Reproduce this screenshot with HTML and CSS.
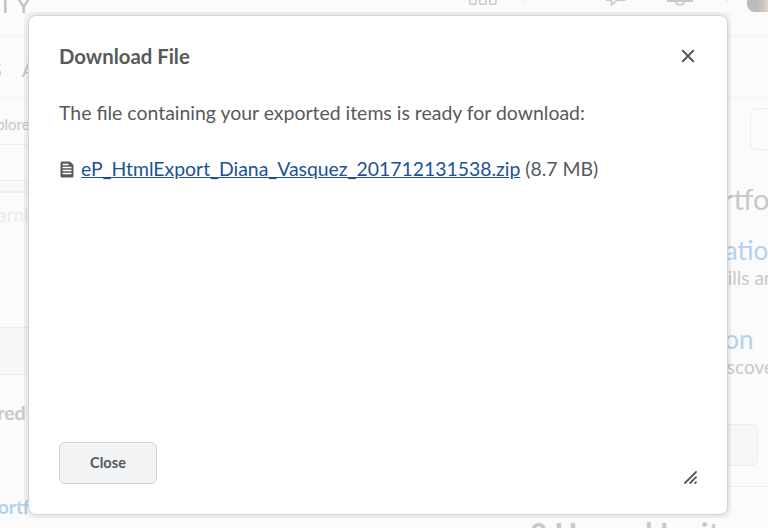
FILE: index.html
```html
<!DOCTYPE html>
<html lang="en">
<head>
    <meta charset="UTF-8">
    <meta name="viewport" content="width=device-width, initial-scale=1.0">
    <title>Download File</title>
    <link rel="stylesheet" href="styles.css">
</head>
<body>
    <!-- Page behind the dialog -->
    <div class="page">
        <div class="topbar">
            <span class="org">CITY</span>
            <svg class="icon-apps" width="30" height="7" viewBox="0 0 30 7" fill="none" stroke="#cacaca" stroke-width="1.6">
                <path d="M1.8 -3V3.2Q1.8 4.2 2.8 4.2H7Q8 4.2 8 3.2V-3M11.8 -3V3.2Q11.8 4.2 12.8 4.2H17Q18 4.2 18 3.2V-3M21.8 -3V3.2Q21.8 4.2 22.8 4.2H27Q28 4.2 28 3.2V-3"/>
            </svg>
            <span class="divider"></span>
            <svg class="icon-chat" width="20" height="7" viewBox="0 0 20 7" fill="none" stroke="#cacaca" stroke-width="1.6">
                <path d="M0 .2H5.5V5L11 .2H19.5"/>
            </svg>
            <svg class="icon-bell" width="26" height="7" viewBox="0 0 26 7" fill="none" stroke="#cacaca" stroke-width="1.6">
                <path d="M0 1H26" stroke-width="2"/>
                <path d="M8.5 1Q9.5 5 13 5T17.5 1"/>
            </svg>
            <span class="divider divider-last"></span>
            <span class="avatar"></span>
        </div>
        <div class="navbar"><span class="nav-active">S</span><span>A</span></div>
        <div class="content">
            <div class="left">
                <div class="tab">Explore</div>
                <div class="filter"></div>
                <div class="gap"></div>
                <div class="prompt">Learning</div>
                <div class="band"></div>
                <div class="shared">Shared</div>
                <div class="portfolio">ePortfolio</div>
            </div>
            <div class="right">
                <div class="field"></div>
                <h2>ePortfolio</h2>
                <a class="link">Presentation</a>
                <p>Skills and</p>
                <a class="link link-short">Collection</a>
                <p>Discover</p>
                <div class="ghost-button"></div>
                <div class="rule"></div>
                <h3>0 Unread Invites</h3>
            </div>
        </div>
    </div>

    <!-- Dialog -->
    <div class="dialog-wrap">
        <div class="dialog">
            <div class="dialog-header">
                <h1>Download File</h1>
                <svg class="dialog-x" width="14" height="14" viewBox="0 0 14 14" stroke="#565a5c" stroke-width="2" stroke-linecap="round">
                    <path d="M1.8 1.8L12.2 12.2M12.2 1.8L1.8 12.2"/>
                </svg>
            </div>
            <p class="message">The file containing your exported items is ready for download:</p>
            <div class="file">
                <svg width="14" height="17" viewBox="0 0 14 17">
                    <path fill="#565a5c" d="M2 .5H10L13.5 4V15Q13.5 16.5 12 16.5H2Q.5 16.5 .5 15V2Q.5 .5 2 .5Z"/>
                    <path stroke="#fff" stroke-width="1.3" d="M2.6 3.5H8.6M2.6 6.5H11.5M2.6 9.5H11.5M2.6 12.5H11.5"/>
                </svg>
                <a href="#">eP_HtmlExport_Diana_Vasquez_201712131538.zip</a>
                <span class="size">(8.7 MB)</span>
            </div>
            <div class="dialog-footer">
                <button type="button">Close</button>
                <svg class="grip" width="14" height="14" viewBox="0 0 14 14" stroke="#565a5c" stroke-width="1.8" stroke-linecap="round">
                    <path d="M2 13L13 2M7.2 13L13 7.2M12.2 13L13 12.2"/>
                </svg>
            </div>
        </div>
    </div>
</body>
</html>
```
FILE: styles.css
```css
* { margin: 0; padding: 0; box-sizing: border-box; }

body {
    font-family: 'Lato', sans-serif;
    color: #565a5c;
    background: #fbfbfb;
    height: 528px;
    overflow: hidden;
    position: relative;
}

/* Background page */
.page {
    height: 528px;
    overflow: hidden;
    color: #c8c8c8;
}

.topbar {
    display: flex;
    height: 37px;
    border-bottom: 1px solid #f1f3f8;
}

.topbar > * { flex-shrink: 0; }

.org {
    width: 500px;
    margin-left: -32px;
    margin-top: -9px;
    font-size: 22px;
    line-height: 27px;
    letter-spacing: 5px;
    color: #bcbcbc;
}

.divider {
    width: 2px;
    height: 2px;
    margin-left: 26px;
    background: #eeeeee;
}

.icon-chat { margin-left: 80px; }
.icon-bell { margin-left: 41px; }
.divider-last { margin-left: 33px; }

.avatar {
    width: 30px;
    height: 12px;
    margin-left: 19px;
    border-radius: 0 0 0 8px;
    background: linear-gradient(90deg, #bdbbba 0 10px, #d2c6bf 17px, #eadbd0 22px);
}

.navbar {
    display: flex;
    gap: 20px;
    height: 61px;
    padding-top: 20px;
    margin-left: -9px;
    font-size: 20px;
    line-height: 24px;
    border-bottom: 1px solid #f5f5f6;
}

.nav-active { color: #b8cfe8; }

.content {
    display: flex;
    height: 430px;
}

.left {
    flex: 0 0 30px;
    overflow: hidden;
    white-space: nowrap;
}

.tab {
    height: 47px;
    padding-top: 16px;
    margin-left: -20px;
    font-size: 15px;
    line-height: 20px;
    border-bottom: 1px solid #f0f0f2;
}

.filter {
    height: 36px;
    border-bottom: 1px solid #eeeeee;
}

.gap {
    height: 12px;
    background: #f8f8f8;
    border-bottom: 2px solid #f0f1f5;
}

.prompt {
    height: 134px;
    padding-top: 10px;
    margin-left: -22px;
    font-size: 19px;
    line-height: 24px;
    color: #e8ebf0;
}

.band {
    height: 48px;
    background: #f7f7f7;
    border-top: 1px solid #ececec;
    border-bottom: 1px solid #ececec;
}

.shared {
    height: 120px;
    padding-top: 26px;
    margin-left: -34px;
    font-size: 19.4px;
    font-weight: bold;
    line-height: 24px;
}

.portfolio {
    margin-left: -24px;
    font-size: 19.4px;
    font-weight: bold;
    line-height: 24px;
    color: #b2d2ec;
}

.right {
    flex: 1;
    min-width: 0;
    padding-left: 490px;
    white-space: nowrap;
}

.field {
    width: 60px;
    height: 42px;
    margin: 10px 0 0 230px;
    border: 1px solid #ededf0;
    border-radius: 6px;
}

.right h2 {
    margin: 31px 0 0 155px;
    font-size: 29px;
    font-weight: normal;
    line-height: 36px;
}

.link {
    display: block;
    margin: 17px 0 0 118px;
    font-size: 26px;
    line-height: 32px;
    color: #b2d2ec;
}

.link-short { margin-top: 33px; }

.right p {
    margin-left: 188px;
    font-size: 19px;
    line-height: 24px;
}

.ghost-button {
    width: 98px;
    height: 42px;
    margin: 45px 0 0 140px;
    background: #f6f6f8;
    border: 1px solid #ededf0;
    border-radius: 6px;
}

.rule {
    height: 1px;
    margin-top: 20px;
    background: #f0f0f0;
}

.right h3 {
    margin: 28px 0 0 10px;
    font-size: 30px;
    line-height: 36px;
}

/* Dialog, the wrap cuts the shadow off a few pixels out */
.dialog-wrap {
    position: absolute;
    top: 12px;
    left: 24px;
    width: 707px;
    height: 506px;
    padding: 3px 3px 3px 4px;
    overflow: hidden;
}

.dialog {
    display: flex;
    flex-direction: column;
    height: 100%;
    padding: 26px 30px 30px;
    background: #ffffff;
    border: 1px solid #cdd5e0;
    border-radius: 8px;
    box-shadow: 0 0 12px rgba(0, 0, 0, 0.18);
}

.dialog-header {
    display: flex;
    justify-content: space-between;
    align-items: center;
    height: 28px;
}

.dialog-header h1 {
    font-size: 20.35px;
    line-height: 28px;
}

.dialog-x { margin-right: 2px; }

.message {
    margin-top: 29px;
    font-size: 19.45px;
    line-height: 28px;
}

.file {
    display: flex;
    align-items: center;
    height: 28px;
    margin-top: 27px;
    font-size: 19.4px;
    white-space: nowrap;
}

.file svg {
    margin-top: 3px;
    margin-left: 1px;
}

.file a {
    margin: 0 5px 0 7px;
    color: #1c5295;
}

.dialog-footer {
    display: flex;
    justify-content: space-between;
    margin-top: auto;
}

.dialog-footer button {
    width: 98px;
    height: 42px;
    padding-bottom: 2px;
    font-family: inherit;
    font-size: 14.6px;
    font-weight: bold;
    color: #565a5c;
    background: #f1f3f5;
    border: 1px solid #cdd5dc;
    border-radius: 6px;
}

.grip {
    align-self: flex-end;
}
```
